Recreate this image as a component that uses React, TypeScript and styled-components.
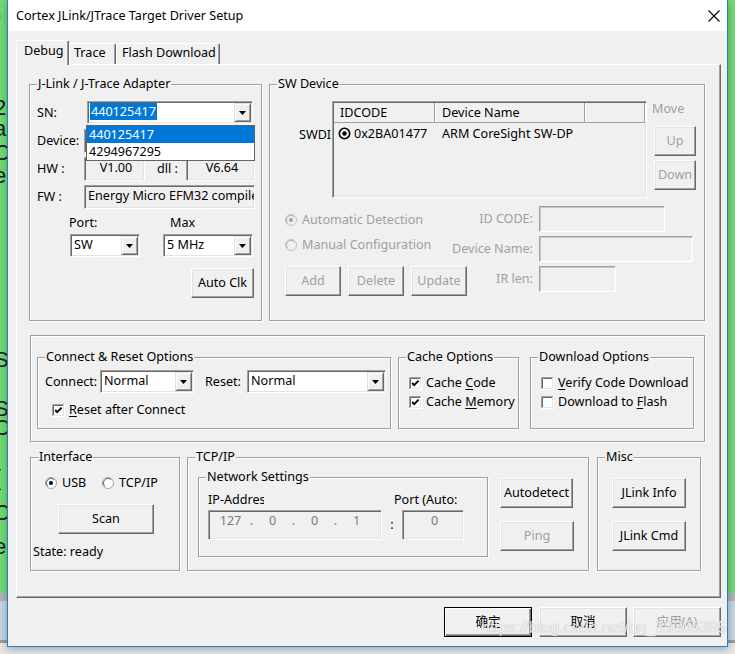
import React from "react";
import styled, { createGlobalStyle, css } from "styled-components";

const GlobalStyle = createGlobalStyle`
  * { box-sizing: border-box; }
  html, body { margin: 0; padding: 0; }
  body {
    font-family: "Noto Sans", "Noto Sans CJK SC", sans-serif;
    font-size: 12.6px;
    color: #000;
    background: #72dc72;
  }
  u { text-decoration-thickness: 1px; text-underline-offset: 2px; }
`;

const Desktop = styled.div`
  position: relative;
  width: 735px;
  height: 654px;
  overflow: hidden;
  padding-left: 7px;
  background: linear-gradient(
    to bottom,
    #72dc72 0 593px,
    #b4b4b4 593px 601px,
    #c9d5e2 601px 640px,
    #9c9c9c 640px 643px,
    #e6e6e6 643px
  );
`;

const BackGlyph = styled.span<{ $top: number }>`
  position: absolute;
  left: -6px;
  top: ${(p) => p.$top}px;
  font-family: "Liberation Sans", sans-serif;
  font-size: 22px;
  line-height: 24px;
  color: #1e1e1e;
`;

const Window = styled.div`
  position: relative;
  width: 721px;
  height: 647px;
  background: #f0f0f0;
  border: 1px solid #1883d7;
  border-top: none;
  box-shadow: 0 2px 8px rgba(0, 0, 0, 0.3);
`;

const TitleBar = styled.div`
  height: 31px;
  background: #fff;
  display: flex;
  align-items: center;
  justify-content: space-between;
  padding: 0 7px 0 8px;
`;

const Title = styled.span`
  line-height: 16px;
`;

const Body = styled.div`
  height: 615px;
  padding: 9px 6px 0 8px;
  display: flex;
  flex-direction: column;
`;

const TabStrip = styled.div`
  display: flex;
  align-items: flex-end;
  height: 24px;
  flex: none;
`;

const Tab = styled.div<{ $w: number; $pl: number; $active?: boolean }>`
  flex: none;
  width: ${(p) => p.$w}px;
  height: ${(p) => (p.$active ? 25 : 21)}px;
  margin-bottom: ${(p) => (p.$active ? -1 : 0)}px;
  padding: ${(p) => (p.$active ? 2 : 1)}px 0 0 ${(p) => p.$pl}px;
  background: #f0f0f0;
  border: 1px solid;
  border-color: #fff #696969 transparent #fff;
  border-bottom: none;
  border-radius: 2px 2px 0 0;
  box-shadow: inset -1px 0 #a0a0a0;
  line-height: 16px;
  white-space: nowrap;
  ${(p) =>
    p.$active &&
    css`
      position: relative;
      z-index: 1;
    `}
`;

const Page = styled.div`
  flex: none;
  width: 705px;
  height: 534px;
  border: 1px solid;
  border-color: #fff #696969 #696969 #fff;
  box-shadow: inset -1px -1px #a0a0a0;
  padding: 19px 0 0 12px;
  display: flex;
  flex-direction: column;
`;

const GroupRow = styled.div<{ $mt?: number; $ml?: number }>`
  display: flex;
  align-items: flex-start;
  margin-top: ${(p) => p.$mt ?? 0}px;
  margin-left: ${(p) => p.$ml ?? 0}px;
`;

const Group = styled.div<{ $w: number; $h: number; $mt?: number; $ml?: number }>`
  position: relative;
  flex: none;
  width: ${(p) => p.$w}px;
  height: ${(p) => p.$h}px;
  margin-top: ${(p) => p.$mt ?? 0}px;
  margin-left: ${(p) => p.$ml ?? 0}px;
  border: 1px solid #a0a0a0;
  box-shadow: inset 1px 1px #fff, 1px 1px #fff;
`;

const GroupTitle = styled.span`
  position: absolute;
  top: -9px;
  left: 7px;
  padding: 0 1px;
  background: #f0f0f0;
  line-height: 16px;
  white-space: nowrap;
`;

const Stack = styled.div<{ $pt?: number; $pl?: number }>`
  display: flex;
  flex-direction: column;
  align-items: flex-start;
  padding: ${(p) => p.$pt ?? 0}px 0 0 ${(p) => p.$pl ?? 0}px;
`;

const Row = styled.div<{ $mt?: number; $ml?: number; $h?: number; $w?: number }>`
  display: flex;
  align-items: center;
  flex: none;
  margin-top: ${(p) => p.$mt ?? 0}px;
  margin-left: ${(p) => p.$ml ?? 0}px;
  ${(p) => p.$h !== undefined && `height: ${p.$h}px;`}
  ${(p) => p.$w !== undefined && `width: ${p.$w}px; overflow: hidden;`}
`;

const Label = styled.span<{ $w?: number; $pl?: number; $ml?: number; $disabled?: boolean; $center?: boolean }>`
  flex: none;
  ${(p) => p.$w !== undefined && `width: ${p.$w}px;`}
  padding-left: ${(p) => p.$pl ?? 0}px;
  margin-left: ${(p) => p.$ml ?? 0}px;
  text-align: ${(p) => (p.$center ? "center" : "left")};
  white-space: nowrap;
  overflow: hidden;
  line-height: 16px;
  color: ${(p) => (p.$disabled ? "#a0a0a0" : "#000")};
`;

const Field = styled.div<{ $w: number; $h?: number; $center?: boolean; $disabled?: boolean; $muted?: boolean }>`
  flex: none;
  width: ${(p) => p.$w}px;
  height: ${(p) => p.$h ?? 24}px;
  border: 1px solid;
  border-color: #a0a0a0 #fff #fff #a0a0a0;
  box-shadow: ${(p) =>
    p.$disabled
      ? "inset 1px 1px #c8c8c8, inset -1px -1px #f4f4f4"
      : "inset 1px 1px #696969, inset -1px -1px #e3e3e3"};
  background: #f0f0f0;
  padding: 2px 0 0 3px;
  line-height: 16px;
  color: ${(p) => (p.$muted ? "#7a7a7a" : "#000")};
  text-align: ${(p) => (p.$center ? "center" : "left")};
  white-space: nowrap;
  overflow: hidden;
`;

const Combo = styled.div<{ $w: number }>`
  flex: none;
  display: flex;
  width: ${(p) => p.$w}px;
  height: 23px;
  border: 1px solid;
  border-color: #a0a0a0 #fff #fff #a0a0a0;
  box-shadow: inset 1px 1px #696969, inset -1px -1px #e3e3e3;
  background: #fff;
  padding: 1px;
`;

const ComboValue = styled.div`
  flex: 1;
  min-width: 0;
  padding: 1px 0 0 2px;
  line-height: 16px;
  white-space: nowrap;
  overflow: hidden;
`;

const Highlight = styled.span`
  display: inline-block;
  margin: -1px 0 0 -1px;
  padding: 0 1px;
  line-height: 17px;
  background: #0078d7;
  color: #fff;
`;

const ComboButton = styled.div`
  flex: none;
  width: 17px;
  display: flex;
  align-items: center;
  justify-content: center;
  background: #f0f0f0;
  border: 1px solid;
  border-color: #e3e3e3 #696969 #696969 #e3e3e3;
  box-shadow: inset 1px 1px #fff, inset -1px -1px #a0a0a0;
`;

const DropList = styled.div`
  position: absolute;
  left: 56px;
  top: 40px;
  width: 169px;
  z-index: 2;
  border: 1px solid #646464;
  background: #fff;
`;

const DropItem = styled.div<{ $selected?: boolean }>`
  height: 17px;
  line-height: 17px;
  padding-left: 2px;
  background: ${(p) => (p.$selected ? "#0078d7" : "#fff")};
  color: ${(p) => (p.$selected ? "#fff" : "#000")};
`;

const Button = styled.button<{ $w: number; $mt?: number; $ml?: number; $primary?: boolean }>`
  flex: none;
  width: ${(p) => p.$w}px;
  height: 30px;
  margin: ${(p) => p.$mt ?? 0}px 0 0 ${(p) => p.$ml ?? 0}px;
  padding: 0;
  font: inherit;
  line-height: 16px;
  white-space: nowrap;
  color: #000;
  background: #f0f0f0;
  border: 1px solid;
  border-color: #fff #696969 #696969 #fff;
  box-shadow: inset -1px -1px #a0a0a0, inset 1px 1px #e3e3e3;
  &:disabled {
    color: #a0a0a0;
  }
  ${(p) =>
    p.$primary &&
    css`
      border-color: #000;
      box-shadow: inset 1px 1px #fff, inset -1px -1px #696969, inset -2px -2px #a0a0a0;
    `}
`;

const Table = styled.div`
  flex: none;
  width: 315px;
  height: 97px;
  border: 1px solid;
  border-color: #a0a0a0 #fff #fff #a0a0a0;
  box-shadow: inset 1px 1px #696969, inset -1px -1px #e3e3e3;
  padding: 1px;
  background: #f0f0f0;
  overflow: hidden;
`;

const TableHead = styled.div`
  display: grid;
  grid-template-columns: 101px 150px 1fr;
  height: 20px;
  border-bottom: 1px solid #a0a0a0;
`;

const HeadCell = styled.div<{ $pl: number }>`
  padding-left: ${(p) => p.$pl}px;
  line-height: 19px;
  border-right: 1px solid #a0a0a0;
  box-shadow: 1px 0 #fff;
  white-space: nowrap;
`;

const TableRow = styled.div`
  display: grid;
  grid-template-columns: 101px 150px 1fr;
  height: 21px;
  align-items: center;
`;

const Cell = styled.div<{ $pl: number }>`
  display: flex;
  align-items: center;
  padding-left: ${(p) => p.$pl}px;
  line-height: 16px;
  white-space: nowrap;
  gap: 3px;
`;

const SwTop = styled.div`
  display: flex;
  align-items: flex-start;
  padding-top: 16px;
`;

const SwdiLabel = styled.span`
  flex: none;
  width: 33px;
  margin-left: 29px;
  padding-top: 26px;
  line-height: 16px;
  overflow: hidden;
  white-space: nowrap;
`;

const SwBottom = styled.div`
  display: flex;
  align-items: flex-start;
  margin-top: 8px;
  padding-left: 15px;
`;

const SwLeft = styled.div`
  flex: none;
  width: 155px;
  display: flex;
  flex-direction: column;
`;

const SwFields = styled.div`
  display: grid;
  grid-template-columns: 93px auto;
  grid-auto-rows: 26px;
  row-gap: 4px;
  column-gap: 6px;
  align-items: center;
`;

const FieldLabel = styled.span`
  justify-self: end;
  color: #a0a0a0;
  line-height: 16px;
  white-space: nowrap;
`;

const Choice = styled.label<{ $w?: number; $disabled?: boolean }>`
  flex: none;
  display: flex;
  align-items: center;
  gap: 5px;
  ${(p) => p.$w !== undefined && `width: ${p.$w}px;`}
  line-height: 16px;
  white-space: nowrap;
  color: ${(p) => (p.$disabled ? "#a0a0a0" : "#000")};
`;

const CheckItem = styled.label`
  display: flex;
  align-items: center;
  gap: 4px;
  line-height: 16px;
  white-space: nowrap;
`;

const IpField = styled(Field)`
  display: flex;
  padding: 2px 0 0 7px;
`;

const IpPart = styled.span<{ $dot?: boolean }>`
  flex: none;
  width: ${(p) => (p.$dot ? 13 : 29)}px;
  text-align: center;
`;

const Footer = styled.div`
  display: flex;
  justify-content: flex-end;
  margin-top: 9px;
`;

const Watermark = styled.span`
  position: absolute;
  left: 473px;
  top: 619px;
  font-family: "Liberation Sans", Arial, sans-serif;
  font-size: 16px;
  line-height: 18px;
  color: rgba(255, 255, 255, 0.85);
  text-shadow: 0 0 1px rgba(0, 0, 0, 0.35);
  pointer-events: none;
  white-space: nowrap;
`;

const Arrow = () => (
  <svg width="7" height="4" viewBox="0 0 7 4">
    <polygon points="0,0 7,0 3.5,4" fill="#000" />
  </svg>
);

const CloseIcon = () => (
  <svg width="12" height="12" viewBox="0 0 12 12">
    <path d="M0.5 0.5 L11.5 11.5 M11.5 0.5 L0.5 11.5" stroke="#000" strokeWidth="1.1" />
  </svg>
);

const CheckBox = ({ checked }: { checked?: boolean }) => (
  <svg width="13" height="13" viewBox="0 0 13 13" style={{ flex: "none" }}>
    <rect x="0" y="0" width="13" height="13" fill="#fff" />
    <path d="M0.5 12 V0.5 H12" stroke="#a0a0a0" fill="none" />
    <path d="M0 12.5 H12.5 V0" stroke="#fff" fill="none" />
    <path d="M1.5 11 V1.5 H11" stroke="#696969" fill="none" />
    <path d="M1 11.5 H11.5 V1" stroke="#e3e3e3" fill="none" />
    {checked && <polyline points="3.2,6 5.2,8.2 9.6,3.6" stroke="#000" strokeWidth="1.9" fill="none" />}
  </svg>
);

const Radio = ({ checked, disabled }: { checked?: boolean; disabled?: boolean }) => (
  <svg width="12" height="12" viewBox="0 0 12 12" style={{ flex: "none" }}>
    <circle cx="6" cy="6" r="5.5" fill={disabled ? "#f0f0f0" : "#fff"} stroke={disabled ? "#c0c0c0" : "#a0a0a0"} />
    <path d="M2.8 9.2 A4.5 4.5 0 0 1 9.2 2.8" stroke={disabled ? "#b0b0b0" : "#696969"} fill="none" />
    {checked && <circle cx="6" cy="6" r="2" fill={disabled ? "#a0a0a0" : "#000"} />}
  </svg>
);

const ListRadio = () => (
  <svg width="13" height="13" viewBox="0 0 13 13" style={{ flex: "none" }}>
    <circle cx="6.5" cy="6.5" r="5.2" stroke="#000" strokeWidth="1.6" fill="none" />
    <circle cx="6.5" cy="6.5" r="2.2" fill="#000" />
  </svg>
);

const ComboBox = ({ w, children }: { w: number; children: React.ReactNode }) => (
  <Combo $w={w}>
    <ComboValue>{children}</ComboValue>
    <ComboButton>
      <Arrow />
    </ComboButton>
  </Combo>
);

const backGlyphs = [
  { ch: ")", top: 3 },
  { ch: "t", top: 74 },
  { ch: "2", top: 96 },
  { ch: "a", top: 117 },
  { ch: "C", top: 141 },
  { ch: "e", top: 164 },
  { ch: "S", top: 348 },
  { ch: "S", top: 397 },
  { ch: "C", top: 416 },
  { ch: "(", top: 466 },
  { ch: "C", top: 501 },
  { ch: "e", top: 535 },
];

const JLinkAdapter = () => (
  <Group $w={233} $h={237}>
    <GroupTitle>J-Link / J-Trace Adapter</GroupTitle>
    <Stack $pt={16} $pl={7}>
      <Row $h={23}>
        <Label $w={50}>SN:</Label>
        <ComboBox w={166}>
          <Highlight>440125417</Highlight>
        </ComboBox>
      </Row>
      <Row $h={24} $mt={5}>
        <Label $w={47}>Device:</Label>
        <Field $w={171} />
      </Row>
      <Row $h={24} $mt={4}>
        <Label $w={47}>HW :</Label>
        <Field $w={61} $center>
          V1.00
        </Field>
        <Label $w={41} $pl={12}>
          dll :
        </Label>
        <Field $w={69} $center>
          V6.64
        </Field>
      </Row>
      <Row $h={24} $mt={4}>
        <Label $w={47}>FW :</Label>
        <Field $w={171}>Energy Micro EFM32 compiled</Field>
      </Row>
      <Row $h={16} $mt={6}>
        <Label $w={133} $pl={32}>
          Port:
        </Label>
        <Label>Max</Label>
      </Row>
      <Row $h={23} $mt={3} $ml={33}>
        <ComboBox w={70}>SW</ComboBox>
        <Row $ml={23}>
          <ComboBox w={90}>5 MHz</ComboBox>
        </Row>
      </Row>
      <Button $w={63} $mt={11} $ml={154}>
        Auto Clk
      </Button>
    </Stack>
    <DropList>
      <DropItem $selected>440125417</DropItem>
      <DropItem>4294967295</DropItem>
    </DropList>
  </Group>
);

const SwDevice = () => (
  <Group $w={436} $h={237} $ml={7}>
    <GroupTitle>SW Device</GroupTitle>
    <SwTop>
      <SwdiLabel>SWDI</SwdiLabel>
      <Table>
        <TableHead>
          <HeadCell $pl={6}>IDCODE</HeadCell>
          <HeadCell $pl={7}>Device Name</HeadCell>
          <HeadCell $pl={0} />
        </TableHead>
        <TableRow>
          <Cell $pl={4}>
            <ListRadio />
            0x2BA01477
          </Cell>
          <Cell $pl={7}>ARM CoreSight SW-DP</Cell>
          <Cell $pl={0} />
        </TableRow>
      </Table>
      <Stack $pl={5}>
        <Label $disabled>Move</Label>
        <Button $w={42} $mt={9} $ml={2} disabled>
          Up
        </Button>
        <Button $w={42} $mt={4} $ml={2} disabled>
          Down
        </Button>
      </Stack>
    </SwTop>
    <SwBottom>
      <SwLeft>
        <Row $h={16} $mt={6}>
          <Choice $disabled>
            <Radio checked disabled />
            Automatic Detection
          </Choice>
        </Row>
        <Row $h={16} $mt={9}>
          <Choice $disabled>
            <Radio disabled />
            Manual Configuration
          </Choice>
        </Row>
        <Row $mt={13}>
          <Button $w={56} disabled>
            Add
          </Button>
          <Button $w={56} $ml={7} disabled>
            Delete
          </Button>
          <Button $w={56} $ml={7} disabled>
            Update
          </Button>
        </Row>
      </SwLeft>
      <SwFields>
        <FieldLabel>ID CODE:</FieldLabel>
        <Field $w={126} $h={26} $disabled />
        <FieldLabel>Device Name:</FieldLabel>
        <Field $w={154} $h={26} $disabled />
        <FieldLabel>IR len:</FieldLabel>
        <Field $w={77} $h={26} $disabled />
      </SwFields>
    </SwBottom>
  </Group>
);

const Options = () => (
  <Group $w={675} $h={107} $mt={14} $ml={1}>
    <GroupRow>
      <Stack $pt={21} $pl={6}>
        <Group $w={354} $h={72}>
          <GroupTitle>Connect &amp; Reset Options</GroupTitle>
          <Stack $pt={12} $pl={7}>
            <Row $h={23}>
              <Label $w={55}>Connect:</Label>
              <ComboBox w={94}>Normal</ComboBox>
              <Label $w={42} $ml={11}>
                Reset:
              </Label>
              <ComboBox w={139}>Normal</ComboBox>
            </Row>
            <Row $h={16} $mt={9} $ml={7}>
              <CheckItem>
                <CheckBox checked />
                <span>
                  <u>R</u>eset after Connect
                </span>
              </CheckItem>
            </Row>
          </Stack>
        </Group>
      </Stack>
      <Stack $pt={21} $pl={7}>
        <Group $w={121} $h={72}>
          <GroupTitle>Cache Options</GroupTitle>
          <Stack $pt={17} $pl={10}>
            <Row $h={16}>
              <CheckItem>
                <CheckBox checked />
                <span>
                  Cache <u>C</u>ode
                </span>
              </CheckItem>
            </Row>
            <Row $h={16} $mt={3}>
              <CheckItem>
                <CheckBox checked />
                <span>
                  Cache <u>M</u>emory
                </span>
              </CheckItem>
            </Row>
          </Stack>
        </Group>
      </Stack>
      <Stack $pt={21} $pl={11}>
        <Group $w={164} $h={72}>
          <GroupTitle>Download Options</GroupTitle>
          <Stack $pt={17} $pl={10}>
            <Row $h={16} $w={147}>
              <CheckItem>
                <CheckBox />
                <span>
                  <u>V</u>erify Code Download
                </span>
              </CheckItem>
            </Row>
            <Row $h={16} $mt={3} $w={147}>
              <CheckItem>
                <CheckBox />
                <span>
                  Download to <u>F</u>lash
                </span>
              </CheckItem>
            </Row>
          </Stack>
        </Group>
      </Stack>
    </GroupRow>
  </Group>
);

const Connection = () => (
  <GroupRow $mt={15} $ml={1}>
    <Group $w={150} $h={114}>
      <GroupTitle>Interface</GroupTitle>
      <Stack $pt={17} $pl={2}>
        <Row $h={16} $ml={12}>
          <Choice $w={57}>
            <Radio checked />
            USB
          </Choice>
          <Choice>
            <Radio />
            TCP/IP
          </Choice>
        </Row>
        <Button $w={96} $mt={13} $ml={25}>
          Scan
        </Button>
        <Row $h={16} $mt={10}>
          <Label>State: ready</Label>
        </Row>
      </Stack>
    </Group>
    <Group $w={402} $h={114} $ml={7}>
      <GroupTitle>TCP/IP</GroupTitle>
      <GroupRow>
        <Group $w={290} $h={80} $mt={19} $ml={10}>
          <GroupTitle>Network Settings</GroupTitle>
          <Stack $pt={14} $pl={9}>
            <Row $h={16}>
              <Label $w={56}>IP-Address</Label>
              <Label $ml={130}>Port (Auto:</Label>
            </Row>
            <Row $h={30} $mt={2}>
              <IpField $w={174} $h={30} $muted>
                <IpPart>127</IpPart>
                <IpPart $dot>.</IpPart>
                <IpPart>0</IpPart>
                <IpPart $dot>.</IpPart>
                <IpPart>0</IpPart>
                <IpPart $dot>.</IpPart>
                <IpPart>1</IpPart>
              </IpField>
              <Label $w={20} $center>
                :
              </Label>
              <Field $w={62} $h={30} $center $muted>
                0
              </Field>
            </Row>
          </Stack>
        </Group>
        <Stack $pt={20} $pl={12}>
          <Button $w={73}>Autodetect</Button>
          <Button $w={74} $mt={13} disabled>
            Ping
          </Button>
        </Stack>
      </GroupRow>
    </Group>
    <Group $w={104} $h={114} $ml={8}>
      <GroupTitle>Misc</GroupTitle>
      <Stack $pt={20} $pl={14}>
        <Button $w={74}>JLink Info</Button>
        <Button $w={74} $mt={13}>
          JLink Cmd
        </Button>
      </Stack>
    </Group>
  </GroupRow>
);

export default function App() {
  return (
    <Desktop>
      <GlobalStyle />
      {backGlyphs.map((g, i) => (
        <BackGlyph key={i} $top={g.top}>
          {g.ch}
        </BackGlyph>
      ))}
      <Window>
        <TitleBar>
          <Title>Cortex JLink/JTrace Target Driver Setup</Title>
          <CloseIcon />
        </TitleBar>
        <Body>
          <TabStrip>
            <Tab $w={53} $pl={7} $active>
              Debug
            </Tab>
            <Tab $w={47} $pl={4}>
              Trace
            </Tab>
            <Tab $w={104} $pl={5}>
              Flash Download
            </Tab>
          </TabStrip>
          <Page>
            <GroupRow>
              <JLinkAdapter />
              <SwDevice />
            </GroupRow>
            <Options />
            <Connection />
          </Page>
          <Footer>
            <Button $w={88} $primary>
              确定
            </Button>
            <Button $w={88} $ml={7}>
              取消
            </Button>
            <Button $w={88} $ml={6} disabled>
              应用(A)
            </Button>
          </Footer>
        </Body>
        <Watermark>https://blog.csdn.net/qq_39306385</Watermark>
      </Window>
    </Desktop>
  );
}
